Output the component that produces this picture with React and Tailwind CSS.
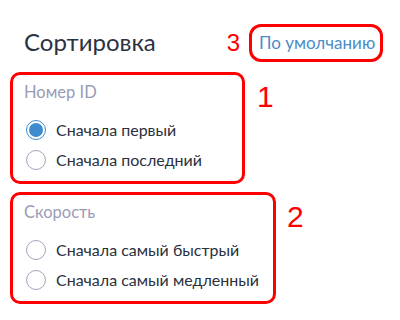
import { useState } from 'react';

const GROUPS = [
  {
    id: 'id',
    num: '1',
    title: 'Номер ID',
    width: 'w-[235px]',
    options: ['Сначала первый', 'Сначала последний'],
  },
  {
    id: 'speed',
    num: '2',
    title: 'Скорость',
    width: 'w-[266px]',
    options: ['Сначала самый быстрый', 'Сначала самый медленный'],
  },
];

export default function App() {
  const [sort, setSort] = useState('id:0');

  return (
    <div className="w-[400px] h-[320px] bg-white font-['Lato','Noto_Sans',sans-serif] pl-[10px] pr-[17px] pt-[24px]">
      <header className="flex items-center h-[38px]">
        <h1 className="pl-[14px] mb-[3px] text-[24px] leading-none text-[#2b3242]">Сортировка</h1>
        <span className="ml-auto mr-[9px] font-['Liberation_Sans',Arial,sans-serif] text-[24px] leading-none text-[#ff0000]">
          3
        </span>
        <button
          type="button"
          onClick={() => setSort('id:0')}
          className="h-[38px] w-[134px] rounded-[12px] border-[3px] border-[#ff0000] pl-[7px] text-left text-[17px] text-[#4a8dc8]"
        >
          По умолчанию
        </button>
      </header>

      <div className="mt-[10px] flex flex-col gap-[8px]">
        {GROUPS.map((g) => (
          <div key={g.id} className="flex items-start">
            <fieldset className={`${g.width} rounded-[10px] border-[3px] border-[#ff0000] pl-[11px] pt-[7px] pb-[6px]`}>
              <div className="h-5 leading-5 text-[16.5px] text-[#9a9cb4]">{g.title}</div>
              <div className="mt-[13px]">
                {g.options.map((o, i) => {
                  const key = `${g.id}:${i}`;
                  const checked = sort === key;
                  return (
                    <label key={key} className="flex h-[30px] items-center cursor-pointer">
                      <input
                        type="radio"
                        name="sort"
                        className="sr-only"
                        checked={checked}
                        onChange={() => setSort(key)}
                      />
                      {checked ? (
                        <span className="ml-[2px] flex h-[20px] w-[20px] items-center justify-center rounded-full border-[1.5px] border-[#3f8bd0]">
                          <span className="h-[14px] w-[14px] rounded-full bg-[#3f8bd0]" />
                        </span>
                      ) : (
                        <span className="ml-[2px] h-[20px] w-[20px] rounded-full border-[1.5px] border-[#a3a4bd]" />
                      )}
                      <span className="ml-[10px] text-[16px] text-[#2a303d]">{o}</span>
                    </label>
                  );
                })}
              </div>
            </fieldset>
            <span
              className={`${g.num === '1' ? 'ml-[12px]' : 'ml-[11px]'} mt-[10px] font-['Liberation_Sans',Arial,sans-serif] text-[30px] leading-none text-[#ff0000]`}
            >
              {g.num}
            </span>
          </div>
        ))}
      </div>
    </div>
  );
}
